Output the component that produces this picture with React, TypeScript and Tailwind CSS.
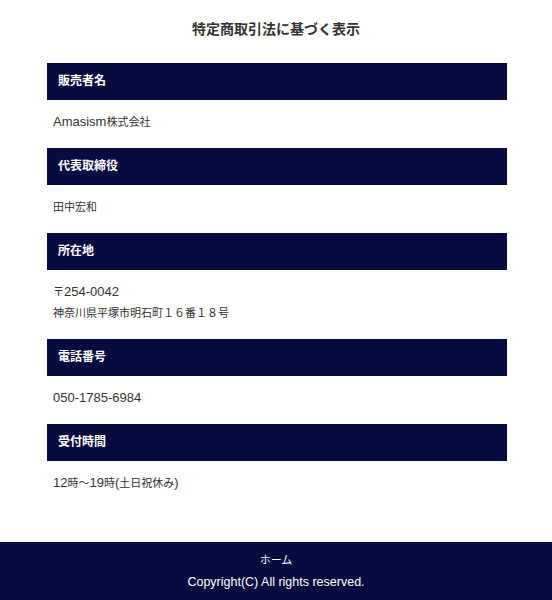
import React from "react";

const font = { fontFamily: '"Liberation Sans", "Noto Sans CJK JP", sans-serif' };

function Bar({ children }: { children: React.ReactNode }) {
  return (
    <div className="bg-[#070b3f] h-[37px] flex items-center pl-[11px] text-white text-[12px] font-bold">
      {children}
    </div>
  );
}

function J({ children }: { children: React.ReactNode }) {
  return <span className="text-[11px] leading-none">{children}</span>;
}

function Row({ children, tall }: { children: React.ReactNode; tall?: boolean }) {
  return (
    <div className={tall ? "h-[69px] pt-[11px] pl-[6px] overflow-hidden" : "h-[48px] pt-[11px] pl-[6px] overflow-hidden"}>
      {children}
    </div>
  );
}

export default function App() {
  return (
    <div className="w-[552px] min-h-[600px] bg-white flex flex-col" style={font}>
      <h1 className="text-[14px] font-bold text-[#333] text-center leading-[24px] mt-[17px] mb-[22px]">
        特定商取引法に基づく表示
      </h1>
      <div className="ml-[47px] w-[460px] flex flex-col text-[13px] text-[#333] leading-[21px]">
        <Bar>販売者名</Bar>
        <Row>
          Amasism<J>株式会社</J>
        </Row>
        <Bar>代表取締役</Bar>
        <Row>
          <J>田中宏和</J>
        </Row>
        <Bar>所在地</Bar>
        <Row tall>
          <div className="h-[21px]">
            <J>〒</J>254-0042
          </div>
          <div className="h-[21px]">
            <J>神奈川県平塚市明石町１６番１８号</J>
          </div>
        </Row>
        <Bar>電話番号</Bar>
        <Row>050-1785-6984</Row>
        <Bar>受付時間</Bar>
        <Row>
          12<J>時～</J>19<J>時</J>(<J>土日祝休み</J>)
        </Row>
      </div>
      <footer className="mt-[33px] bg-[#070c40] text-white text-center pt-[10px] pb-[10px] flex flex-col gap-[5px]">
        <div className="text-[11px] leading-[17px]">ホーム</div>
        <div className="text-[12.5px] leading-[17px]">Copyright(C) All rights reserved.</div>
      </footer>
    </div>
  );
}
